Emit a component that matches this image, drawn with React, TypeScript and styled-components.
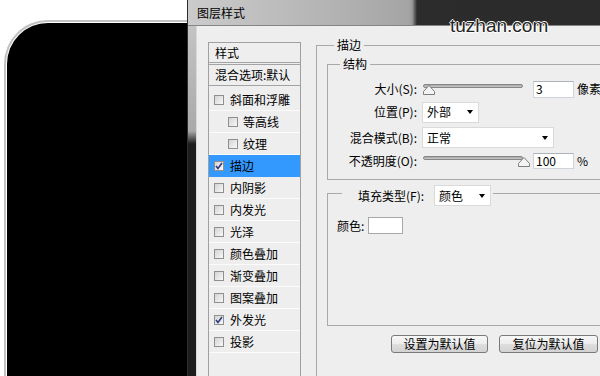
import React from 'react'
import styled, { createGlobalStyle } from 'styled-components'

const CJK = `'Noto Sans CJK SC', 'Noto Sans', sans-serif`

const GlobalStyle = createGlobalStyle`
  html, body {
    margin: 0;
    padding: 0;
    background: #fff;
  }
  body {
    font-family: ${CJK};
  }
`

const Page = styled.div`
  position: relative;
  display: flex;
  width: 600px;
  height: 376px;
  overflow: hidden;
  background: #fff;
  font-family: ${CJK};
  font-size: 12px;
  line-height: 14px;
  color: #000;
`

const Watermark = styled.div`
  position: absolute;
  left: 450px;
  top: 16px;
  font-family: 'Liberation Sans', Arial, sans-serif;
  font-size: 19px;
  line-height: 19px;
  color: #262626;
  text-shadow: 1px 0 0 #fff, -1px 0 0 #fff, 0 1px 0 #fff, 0 -1px 0 #fff;
`

/* canvas with the black rounded shape behind the dialog */
const Canvas = styled.div`
  flex: 0 0 187px;
  display: flex;
  box-sizing: border-box;
  padding: 20px 0 0 4px;
`

const ArtOutline = styled.div`
  flex: 1;
  display: flex;
  padding: 1px 0 0 1px;
  background: #fff;
  border-top: 2px solid #c2c2c2;
  border-left: 2px solid #c2c2c2;
  border-top-left-radius: 44px;
`

const ArtShape = styled.div`
  flex: 1;
  background: #000;
  border-top-left-radius: 41px;
`

/* dialog window */
const Dialog = styled.div`
  flex: 0 0 480px;
  display: flex;
  flex-direction: column;
  border-left: 1px solid #2e2e2e;
`

const TitleBar = styled.div`
  flex: none;
  height: 26px;
  box-sizing: border-box;
  display: flex;
  align-items: center;
  padding-left: 9px;
  border-bottom: 1px solid #858585;
  background: linear-gradient(
    to right,
    #cbcbcb 0px,
    #b7b7b7 120px,
    #a5a5a5 220px,
    #9b9b9b 224px,
    #2c2c2c 229px,
    #2a2a2a 100%
  );
`

const Body = styled.div`
  flex: 1;
  display: flex;
  min-height: 0;
`

const FrameEdge = styled.div`
  flex: 0 0 8px;
  border-right: 1px solid #d8d8d8;
  background: linear-gradient(to bottom, #c4c4c4 0, #a9a9a9 105px, #1d1d1d 118px, #1d1d1d 100%);
`

const Content = styled.div`
  flex: 1;
  display: flex;
  align-items: flex-start;
  padding: 12px 0 0 11px;
  background: #eeeeee;
`

/* left list of effects */
const StyleList = styled.div`
  flex: 0 0 93px;
  height: 360px;
  box-sizing: border-box;
  margin-top: 4px;
  display: flex;
  flex-direction: column;
  border: 1px solid #a0a0a0;
  border-bottom: none;
`

const ListHeader = styled.div`
  height: 19px;
  display: flex;
  align-items: center;
  padding-left: 6px;
  border-bottom: 1px solid #a3a3a3;
`

const BlendRow = styled.div`
  height: 20px;
  display: flex;
  align-items: center;
  margin-top: 1px;
  padding-left: 6px;
  border-top: 1px solid #a3a3a3;
  border-bottom: 1px solid #a3a3a3;
  white-space: nowrap;
`

const EffectRows = styled.div`
  padding-top: 3px;
`

const EffectRow = styled.div<{ $indent?: boolean; $active?: boolean }>`
  height: 21px;
  display: flex;
  align-items: center;
  gap: ${(p) => (p.$indent ? 5 : 6)}px;
  padding-left: ${(p) => (p.$indent ? 19 : 5)}px;
  border-bottom: 1px solid ${(p) => (p.$active ? '#3399ff' : '#fbfbfb')};
  background: ${(p) => (p.$active ? '#3399ff' : 'transparent')};
  white-space: nowrap;
`

const CheckBox = styled.span`
  flex: none;
  width: 10px;
  height: 10px;
  box-sizing: border-box;
  display: flex;
  align-items: center;
  justify-content: center;
  border: 1px solid #8f8f8f;
  background: linear-gradient(135deg, #d4d4d4, #f8f8f8);
`

/* right side group boxes */
const Group = styled.fieldset<{ $pad: string }>`
  margin: 0;
  padding: ${(p) => p.$pad};
  min-width: 0;
  border: 1px solid #a9a9a9;
`

const OuterGroup = styled(Group)`
  flex: 1;
  margin-left: 15px;
  height: 420px;
`

const GroupLegend = styled.legend<{ $offset: number }>`
  margin-left: ${(p) => p.$offset}px;
  padding: 0 3px;
  line-height: 14px;
`

const FillLegend = styled.legend`
  margin-left: 5px;
  padding: 5px 2px 0 16px;
`

const LegendInner = styled.div`
  display: flex;
  align-items: center;
  gap: 10px;
`

const FieldRow = styled.div<{ $h: number; $mt: number }>`
  height: ${(p) => p.$h}px;
  margin-top: ${(p) => p.$mt}px;
  display: flex;
  align-items: center;
`

const FieldLabel = styled.span`
  flex: 0 0 89px;
  margin-right: 5px;
  text-align: right;
  white-space: nowrap;
`

const Slider = styled.div`
  position: relative;
  flex: none;
  width: 102px;
  height: 12px;
  margin-right: 9px;
`

const Track = styled.div`
  width: 100px;
  height: 4px;
  margin: 1px 0 0 1px;
  box-sizing: border-box;
  border: 1px solid #868686;
  border-radius: 2px;
  background: linear-gradient(#a2a2a2, #cdcdcd);
`

const Thumb = styled.svg<{ $at: number }>`
  position: absolute;
  top: 2px;
  left: ${(p) => p.$at}px;
`

const NumberBox = styled.div<{ $h: number }>`
  flex: none;
  width: 41px;
  height: ${(p) => p.$h}px;
  box-sizing: border-box;
  display: flex;
  align-items: center;
  padding-left: 2px;
  background: #fff;
  border: 1px solid #cfd3da;
  border-top-color: #aeb2ba;
`

const Unit = styled.span`
  margin-left: 3px;
`

const Select = styled.div<{ $w: number }>`
  flex: none;
  width: ${(p) => p.$w}px;
  height: 21px;
  box-sizing: border-box;
  display: flex;
  align-items: center;
  justify-content: space-between;
  padding: 0 5px 0 4px;
  background: #fff;
  border: 1px solid #dadada;
`

const Caret = styled.span`
  width: 0;
  height: 0;
  border-left: 3.5px solid transparent;
  border-right: 3.5px solid transparent;
  border-top: 4px solid #000;
`

const FillBody = styled.div`
  height: 108px;
`

const ColorRow = styled.div`
  display: flex;
  align-items: center;
  gap: 4px;
`

const Swatch = styled.div`
  width: 35px;
  height: 17px;
  box-sizing: border-box;
  background: #fff;
  border: 1px solid #a8a8a8;
`

const ButtonRow = styled.div`
  display: flex;
  gap: 11px;
  margin-top: 9px;
  padding-left: 64px;
`

const Button = styled.div<{ $w: number }>`
  flex: none;
  width: ${(p) => p.$w}px;
  height: 18px;
  box-sizing: border-box;
  display: flex;
  align-items: center;
  justify-content: center;
  border: 1px solid #7a7a7a;
  border-radius: 3px;
  background: linear-gradient(#f7f7f7 0%, #ececec 50%, #dedede 51%, #d2d2d2 100%);
`

const effects = [
  { name: '斜面和浮雕' },
  { name: '等高线', indent: true },
  { name: '纹理', indent: true },
  { name: '描边', checked: true, active: true },
  { name: '内阴影' },
  { name: '内发光' },
  { name: '光泽' },
  { name: '颜色叠加' },
  { name: '渐变叠加' },
  { name: '图案叠加' },
  { name: '外发光', checked: true },
  { name: '投影' },
]

const Check = ({ checked }: { checked?: boolean }) => (
  <CheckBox>
    {checked && (
      <svg width="8" height="8" viewBox="0 0 8 8">
        <polyline points="1,4 3,6.5 7,1" fill="none" stroke="#2e3a82" strokeWidth="1.6" />
      </svg>
    )}
  </CheckBox>
)

const SliderControl = ({ at }: { at: number }) => (
  <Slider>
    <Track />
    <Thumb $at={at} width="12" height="10" viewBox="0 0 12 10">
      <path d="M6 0.5 L11.5 6.5 L11.5 9.5 L0.5 9.5 L0.5 6.5 Z" fill="#f4f4f4" stroke="#7d7d7d" strokeWidth="1" />
    </Thumb>
  </Slider>
)

const App: React.FC = () => {
  return (
    <Page>
      <GlobalStyle />
      <Canvas>
        <ArtOutline>
          <ArtShape />
        </ArtOutline>
      </Canvas>

      <Dialog>
        <TitleBar>图层样式</TitleBar>
        <Body>
          <FrameEdge />
          <Content>
            <StyleList>
              <ListHeader>样式</ListHeader>
              <BlendRow>混合选项:默认</BlendRow>
              <EffectRows>
                {effects.map((e) => (
                  <EffectRow key={e.name} $indent={e.indent} $active={e.active}>
                    <Check checked={e.checked} />
                    {e.name}
                  </EffectRow>
                ))}
              </EffectRows>
            </StyleList>

            <OuterGroup $pad="5px 0 0 10px">
              <GroupLegend $offset={7}>描边</GroupLegend>

              <Group $pad="7px 0 7px 0">
                <GroupLegend $offset={12}>结构</GroupLegend>
                <FieldRow $h={22} $mt={0}>
                  <FieldLabel>大小(S):</FieldLabel>
                  <SliderControl at={1} />
                  <NumberBox $h={17}>3</NumberBox>
                  <Unit>像素</Unit>
                </FieldRow>
                <FieldRow $h={22} $mt={1}>
                  <FieldLabel>位置(P):</FieldLabel>
                  <Select $w={57}>
                    外部
                    <Caret />
                  </Select>
                </FieldRow>
                <FieldRow $h={23} $mt={3}>
                  <FieldLabel>混合模式(B):</FieldLabel>
                  <Select $w={132}>
                    正常
                    <Caret />
                  </Select>
                </FieldRow>
                <FieldRow $h={23} $mt={0}>
                  <FieldLabel>不透明度(O):</FieldLabel>
                  <SliderControl at={96} />
                  <NumberBox $h={16}>100</NumberBox>
                  <Unit>%</Unit>
                </FieldRow>
              </Group>

              <Group $pad="11px 0 0 9px">
                <FillLegend>
                  <LegendInner>
                    填充类型(F):
                    <Select $w={57}>
                      颜色
                      <Caret />
                    </Select>
                  </LegendInner>
                </FillLegend>
                <FillBody>
                  <ColorRow>
                    颜色:
                    <Swatch />
                  </ColorRow>
                </FillBody>
              </Group>

              <ButtonRow>
                <Button $w={97}>设置为默认值</Button>
                <Button $w={99}>复位为默认值</Button>
              </ButtonRow>
            </OuterGroup>
          </Content>
        </Body>
      </Dialog>

      <Watermark>tuzhan.com</Watermark>
    </Page>
  )
}

export default App
